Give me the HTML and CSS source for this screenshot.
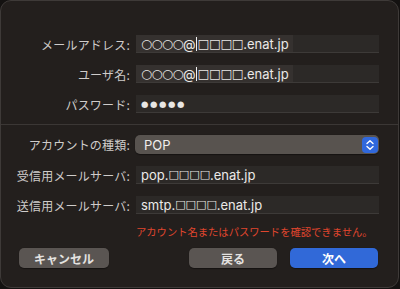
FILE: index.html
```html
<!DOCTYPE html>
<html lang="ja">

<head>
    <meta charset="UTF-8">
    <meta name="viewport" content="width=device-width, initial-scale=1.0">
    <title>アカウントを追加</title>
    <link rel="stylesheet" href="styles.css">
</head>

<body>
    <div class="window">
        <div class="form">
            <label class="label">メールアドレス:</label>
            <div class="field"><span class="value sel"><span class="sym">○○○○</span>@<span class="caret"></span><span class="sym">□□□□</span>.enat.jp</span></div>

            <label class="label">ユーザ名:</label>
            <div class="field"><span class="value sel"><span class="sym">○○○○</span>@<span class="caret"></span><span class="sym">□□□□</span>.enat.jp</span></div>

            <label class="label">パスワード:</label>
            <div class="field"><span class="value dots">●●●●●</span></div>
        </div>

        <hr class="separator">

        <div class="form lower">
            <label class="label">アカウントの種類:</label>
            <div class="popup">
                <span class="popup-value">POP</span>
                <span class="stepper">
                    <svg width="10" height="12" viewBox="0 0 10 12">
                        <path d="M2 4.5 L5 1.8 L8 4.5" fill="none" stroke="#fff" stroke-width="1.4" stroke-linecap="round" stroke-linejoin="round"/>
                        <path d="M2 7.5 L5 10.2 L8 7.5" fill="none" stroke="#fff" stroke-width="1.4" stroke-linecap="round" stroke-linejoin="round"/>
                    </svg>
                </span>
            </div>

            <label class="label">受信用メールサーバ:</label>
            <div class="field"><span class="value">pop.<span class="sym small">□□□□</span>.enat.jp</span></div>

            <label class="label">送信用メールサーバ:</label>
            <div class="field"><span class="value">smtp.<span class="sym small">□□□□</span>.enat.jp</span></div>

            <div></div>
            <p class="error">アカウント名またはパスワードを確認できません。</p>
        </div>

        <div class="buttons">
            <button class="btn cancel">キャンセル</button>
            <div class="right">
                <button class="btn">戻る</button>
                <button class="btn primary">次へ</button>
            </div>
        </div>
    </div>
</body>

</html>
```

FILE: styles.css
```css
body {
    margin: 0;
    padding: 0;
    width: 400px;
    height: 289px;
    background-color: #141211;
    font-family: Inter, "Noto Sans CJK JP", sans-serif;
    color: #e4e2e0;
    overflow: hidden;
}

.window {
    box-sizing: border-box;
    width: 399px;
    height: 288px;
    margin: 0;
    background-color: #231f1d;
    border: 1px solid #3e3a38;
    border-radius: 11px;
    padding-top: 34px;
}

.form {
    display: grid;
    grid-template-columns: 129px 243px;
    column-gap: 6px;
    row-gap: 12px;
    align-items: center;
}

.label {
    text-align: right;
    font-family: "Noto Sans CJK JP", sans-serif;
    font-size: 12px;
    color: #cfccca;
    letter-spacing: 0.2px;
}

.field {
    box-sizing: border-box;
    height: 18px;
    background-color: #2c2927;
    border-bottom: 1px solid #3d3a38;
    display: flex;
    align-items: center;
    padding-left: 0;
}

.value {
    display: flex;
    align-items: center;
    height: 17px;
    padding: 0 4px 0 5px;
    font-size: 13px;
    color: #ebe9e7;
}

.sel {
    background-color: #35312f;
}

.sym {
    font-family: "DejaVu Sans", sans-serif;
    font-size: 12.5px;
    letter-spacing: -0.4px;
}

.sym.small {
    font-size: 11px;
    letter-spacing: 0;
}

.caret {
    display: inline-block;
    width: 1px;
    height: 14px;
    background-color: #f2f2f2;
    margin: 0 0.5px;
}

.dots {
    font-family: "DejaVu Sans", sans-serif;
    font-size: 8.5px;
    letter-spacing: 1.6px;
    color: #e8e6e4;
}

.separator {
    border: none;
    border-top: 1px solid #3b3735;
    margin: 11px 0 10px;
}

.lower {
    row-gap: 12px;
}

.popup {
    box-sizing: border-box;
    height: 19px;
    margin-left: -1px;
    background-color: #58534f;
    border-radius: 5px;
    display: flex;
    align-items: center;
    justify-content: space-between;
    padding: 0 1px 0 9px;
    box-shadow: 0 0.5px 1px rgba(0, 0, 0, 0.4);
}

.popup-value {
    font-size: 13px;
    color: #f0eeec;
}

.stepper {
    width: 16px;
    height: 16px;
    border-radius: 4px;
    background-color: #3068dc;
    display: flex;
    align-items: center;
    justify-content: center;
}

.error {
    margin: -2px 0 0;
    font-family: "Noto Sans CJK JP", sans-serif;
    font-size: 10.3px;
    color: #e0462e;
    white-space: nowrap;
}

.buttons {
    display: flex;
    justify-content: space-between;
    padding: 0 20px 0 18px;
    margin-top: 9px;
}

.right {
    display: flex;
    gap: 13px;
}

.btn {
    width: 88px;
    height: 20px;
    border: none;
    border-radius: 5px;
    background-color: #5a5552;
    color: #e4e2e0;
    font-family: "Noto Sans CJK JP", sans-serif;
    font-size: 12px;
    font-weight: 600;
    padding: 0;
    box-shadow: 0 0.5px 1px rgba(0, 0, 0, 0.4);
}

.cancel {
    width: 90px;
}

.primary {
    background-color: #3169d8;
    color: #fff;
}
```
